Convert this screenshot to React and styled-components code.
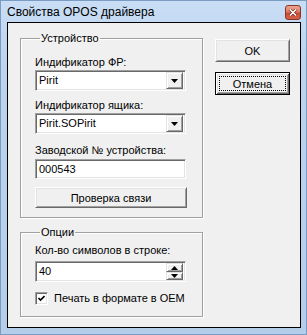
import React from 'react'
import styled, { createGlobalStyle } from 'styled-components'

const GlobalStyle = createGlobalStyle`
  html, body {
    margin: 0;
    padding: 0;
    background: #b9d1ea;
  }
  * {
    box-sizing: border-box;
  }
`

const Window = styled.div`
  width: 307px;
  height: 335px;
  display: flex;
  flex-direction: column;
  background: linear-gradient(to bottom, #c9def5 0px, #bcd4ee 60px, #b4cde9 100%);
  border: 1px solid #7a9cc2;
  font-family: 'Liberation Sans', Arial, sans-serif;
  font-size: 11px;
  color: #000;
`

const TitleBar = styled.div`
  height: 21px;
  flex-shrink: 0;
  display: flex;
  align-items: center;
  justify-content: space-between;
  padding: 1px 5px 0 6px;
`

const Title = styled.div`
  font-size: 12px;
  color: #000;
`

const CloseButton = styled.div`
  width: 16px;
  height: 15px;
  margin-top: 1px;
  display: flex;
  align-items: center;
  justify-content: center;
  border: 1px solid #8a3527;
  border-radius: 3px;
  background: linear-gradient(to bottom, #eba593 0%, #df7b64 45%, #c94a30 55%, #d4634a 100%);
`

const Client = styled.div`
  flex: 1;
  margin: 0 5px 6px 6px;
  border: 1px solid #000;
  background: #f0f0f0;
  display: flex;
  padding: 9px 11px 0 12px;
  gap: 12px;
`

const LeftColumn = styled.div`
  display: flex;
  flex-direction: column;
  gap: 8px;
`

const RightColumn = styled.div`
  display: flex;
  flex-direction: column;
  gap: 10px;
  padding-top: 7px;
`

const Group = styled.fieldset`
  margin: 0;
  width: 183px;
  padding: ${p => p.$pad};
  border: 1px solid #a0a0a0;
  box-shadow: 1px 1px 0 #fff, inset 1px 1px 0 #fff;
  display: flex;
  flex-direction: column;
`

const Legend = styled.legend`
  padding: 0 1px;
  margin-left: 5px;
  line-height: 13px;
`

const FieldLabel = styled.div`
  line-height: 13px;
  margin-top: ${p => p.$top || 0}px;
  margin-bottom: ${p => p.$bottom || 1}px;
`

const Sunken = styled.div`
  display: flex;
  align-items: center;
  width: 151px;
  height: ${p => p.$height || 21}px;
  background: #fff;
  border: 1px solid;
  border-color: #a0a0a0 #fff #fff #a0a0a0;
  box-shadow: inset 1px 1px 0 #696969, inset -1px -1px 0 #e3e3e3;
  padding: 2px;
`

const Value = styled.div`
  flex: 1;
  padding-left: 1px;
  line-height: 13px;
`

const Raised = styled.div`
  width: 17px;
  height: ${p => p.$height || 17}px;
  display: flex;
  align-items: center;
  justify-content: center;
  background: #f0f0f0;
  border: 1px solid;
  border-color: #e3e3e3 #696969 #696969 #e3e3e3;
  box-shadow: inset 1px 1px 0 #fff, inset -1px -1px 0 #a0a0a0;
`

const SpinStack = styled.div`
  display: flex;
  flex-direction: column;
`

const Button = styled.div`
  position: relative;
  width: ${p => p.$width || 75}px;
  height: ${p => p.$height || 23}px;
  display: flex;
  align-items: center;
  justify-content: center;
  background: #f0f0f0;
  border: 1px solid;
  border-color: ${p => (p.$default ? '#000' : '#fff #696969 #696969 #fff')};
  box-shadow: ${p =>
    p.$default
      ? 'inset 1px 1px 0 #fff, inset -1px -1px 0 #696969, inset 2px 2px 0 #e3e3e3, inset -2px -2px 0 #a0a0a0'
      : 'inset 1px 1px 0 #e3e3e3, inset -1px -1px 0 #a0a0a0'};
  margin-top: ${p => p.$top || 0}px;

  &::after {
    content: '';
    display: ${p => (p.$default ? 'block' : 'none')};
    position: absolute;
    inset: 3px;
    border: 1px dotted #000;
  }
`

const CheckRow = styled.label`
  display: flex;
  align-items: center;
  gap: 6px;
  margin-top: 10px;
  line-height: 13px;
`

const CheckBox = styled.div`
  width: 13px;
  height: 13px;
  display: flex;
  align-items: center;
  justify-content: center;
  background: #fff;
  border: 1px solid;
  border-color: #a0a0a0 #fff #fff #a0a0a0;
  box-shadow: inset 1px 1px 0 #696969, inset -1px -1px 0 #e3e3e3;
`

const ArrowDown = () => (
  <svg width="7" height="4" viewBox="0 0 7 4">
    <polygon points="0,0 7,0 3.5,4" fill="#000" />
  </svg>
)

const ArrowUp = () => (
  <svg width="7" height="4" viewBox="0 0 7 4">
    <polygon points="0,4 7,4 3.5,0" fill="#000" />
  </svg>
)

const ComboBox = ({ value }) => (
  <Sunken>
    <Value>{value}</Value>
    <Raised>
      <ArrowDown />
    </Raised>
  </Sunken>
)

const App = () => (
  <>
    <GlobalStyle />
    <Window>
      <TitleBar>
        <Title>Свойства OPOS драйвера</Title>
        <CloseButton>
          <svg width="8" height="7" viewBox="0 0 8 7">
            <path d="M1 0.5 L7 6.5 M7 0.5 L1 6.5" stroke="#5a1a10" strokeWidth="2.6" />
            <path d="M1 0.5 L7 6.5 M7 0.5 L1 6.5" stroke="#fff" strokeWidth="1.6" />
          </svg>
        </CloseButton>
      </TitleBar>
      <Client>
        <LeftColumn>
          <Group $pad="11px 13px 9px 14px">
            <Legend>Устройство</Legend>
            <FieldLabel>Индификатор ФР:</FieldLabel>
            <ComboBox value="Pirit" />
            <FieldLabel $top={8}>Индификатор ящика:</FieldLabel>
            <ComboBox value="Pirit.SOPirit" />
            <FieldLabel $top={10} $bottom={2}>Заводской № устройства:</FieldLabel>
            <Sunken $height={20}>
              <Value>000543</Value>
            </Sunken>
            <Button $width={152} $height={21} $top={8}>Проверка связи</Button>
          </Group>
          <Group $pad="5px 13px 11px 14px">
            <Legend>Опции</Legend>
            <FieldLabel $bottom={4}>Кол-во символов в строке:</FieldLabel>
            <Sunken>
              <Value>40</Value>
              <SpinStack>
                <Raised $height={9}>
                  <ArrowUp />
                </Raised>
                <Raised $height={8}>
                  <ArrowDown />
                </Raised>
              </SpinStack>
            </Sunken>
            <CheckRow>
              <CheckBox>
                <svg width="7" height="7" viewBox="0 0 7 7">
                  <path d="M0.5 3 L2.5 5 L6.5 1" stroke="#000" strokeWidth="1.6" fill="none" />
                </svg>
              </CheckBox>
              Печать в формате в OEM
            </CheckRow>
          </Group>
        </LeftColumn>
        <RightColumn>
          <Button>OK</Button>
          <Button $default>Отмена</Button>
        </RightColumn>
      </Client>
    </Window>
  </>
)

export default App
